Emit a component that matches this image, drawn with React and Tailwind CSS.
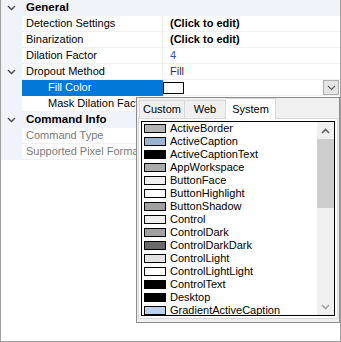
import React from "react";

const gridFont = { fontFamily: '"Liberation Sans", Arial, sans-serif' };

function Chevron({ className = "" }) {
  return (
    <svg width="9" height="6" viewBox="0 0 9 6" className={className}>
      <path d="M1 1 L4.5 4.5 L8 1" fill="none" stroke="#4a4a4a" strokeWidth="1.4" />
    </svg>
  );
}

function CategoryRow({ label }) {
  return (
    <div className="flex h-[16px] bg-[#f0f3f9]">
      <div className="flex w-[21px] items-center justify-center">
        <Chevron />
      </div>
      <div className="flex items-center pl-[4px] text-[11.5px] font-bold text-black">{label}</div>
    </div>
  );
}

function PropRow({ label, value, indent, muted, valueClass = "", selected, children }) {
  return (
    <div className="flex h-[16px]">
      <div className="w-[21px] bg-[#f0f3f9] flex items-center justify-center">
        {indent === "toggle" && <Chevron />}
      </div>
      <div
        className={`flex w-[141px] items-center overflow-hidden whitespace-nowrap border-b border-r text-[11px] ${
          selected ? "bg-[#0078d7] border-[#0078d7] text-white" : "border-[#f0f0f0]"
        } ${indent === "child" ? "pl-[26px]" : "pl-[4px]"} ${muted ? "text-[#7a7a7a]" : selected ? "" : "text-black"}`}
      >
        {label}
      </div>
      <div className={`flex flex-1 items-center border-b border-[#f0f0f0] text-[11px] ${valueClass}`}>
        {children ? children : <span className="pl-[7px]">{value}</span>}
      </div>
    </div>
  );
}

const colors = [
  ["ActiveBorder", "#b4b4b4"],
  ["ActiveCaption", "#99b4d1"],
  ["ActiveCaptionText", "#000000"],
  ["AppWorkspace", "#ababab"],
  ["ButtonFace", "#f0f0f0"],
  ["ButtonHighlight", "#ffffff"],
  ["ButtonShadow", "#a0a0a0"],
  ["Control", "#f0f0f0"],
  ["ControlDark", "#a0a0a0"],
  ["ControlDarkDark", "#696969"],
  ["ControlLight", "#e3e3e3"],
  ["ControlLightLight", "#ffffff"],
  ["ControlText", "#000000"],
  ["Desktop", "#000000"],
  ["GradientActiveCaption", "#b9d1ea"],
];

function ColorPopup() {
  return (
    <div className="absolute left-[135px] top-[97px] flex h-[226px] w-[204px] flex-col border border-[#8c8c8c] bg-[#f0f0f0]">
      <div className="flex h-[20px] items-end pl-[2px] text-[11px] text-black">
        <div className="flex h-[18px] w-[46px] items-center justify-center border border-b-0 border-[#d9d9d9]">Custom</div>
        <div className="flex h-[18px] w-[41px] items-center justify-center border-t border-r border-[#d9d9d9]">Web</div>
        <div className="relative z-10 -mb-[1px] flex h-[21px] w-[50px] items-start justify-center border-t border-r border-[#d9d9d9] bg-white pt-[2px]">
          System
        </div>
      </div>
      <div className="mx-[1px] h-[201px] border border-[#d9d9d9] bg-white px-[2px] pt-[2px]">
        <div className="flex h-[195px] overflow-hidden border border-black bg-white">
          <div className="flex-1 overflow-hidden">
            {colors.map(([name, c]) => (
              <div key={name} className="flex h-[13px] items-center whitespace-nowrap pl-[2px] text-[11px] leading-none text-black">
                <span className="h-[9px] w-[22px] shrink-0 border border-black" style={{ backgroundColor: c }} />
                <span className="ml-[4px]">{name}</span>
              </div>
            ))}
          </div>
          <div className="flex w-[17px] flex-col bg-[#f0f0f0]">
            <div className="flex h-[17px] items-center justify-center">
              <svg width="9" height="6" viewBox="0 0 9 6">
                <path d="M1 5 L4.5 1.5 L8 5" fill="none" stroke="#606060" strokeWidth="1.6" />
              </svg>
            </div>
            <div className="h-[69px] bg-[#cdcdcd]" />
            <div className="flex-1" />
            <div className="flex h-[17px] items-center justify-center">
              <svg width="9" height="6" viewBox="0 0 9 6">
                <path d="M1 1 L4.5 4.5 L8 1" fill="none" stroke="#a3a3a3" strokeWidth="1.6" />
              </svg>
            </div>
          </div>
        </div>
      </div>
    </div>
  );
}

export default function App() {
  return (
    <div className="relative h-[342px] w-[341px] border-x border-b border-[#a0a0a0] bg-white" style={gridFont}>
      <CategoryRow label="General" />
      <PropRow label="Detection Settings" value="(Click to edit)" valueClass="font-bold text-black" />
      <PropRow label="Binarization" value="(Click to edit)" valueClass="font-bold text-black" />
      <PropRow label="Dilation Factor" value="4" valueClass="text-[#1f5bc4]" />
      <PropRow label="Dropout Method" value="Fill" indent="toggle" valueClass="text-[#27306b]" />
      <PropRow label="Fill Color" indent="child" selected>
        <div className="flex w-full items-center">
          <span className="h-[12px] w-[21px] border border-black bg-white" />
          <div className="ml-auto mr-[1px] flex h-[15px] w-[16px] items-center justify-center border border-[#adadad] bg-[#e5e5e5]">
            <svg width="9" height="6" viewBox="0 0 9 6">
              <path d="M1 1 L4.5 4.5 L8 1" fill="none" stroke="#606060" strokeWidth="1.2" />
            </svg>
          </div>
        </div>
      </PropRow>
      <PropRow label="Mask Dilation Factor" value="" indent="child" />
      <CategoryRow label="Command Info" />
      <PropRow label="Command Type" value="" muted />
      <PropRow label="Supported Pixel Formats" value="" muted />
      <ColorPopup />
    </div>
  );
}
